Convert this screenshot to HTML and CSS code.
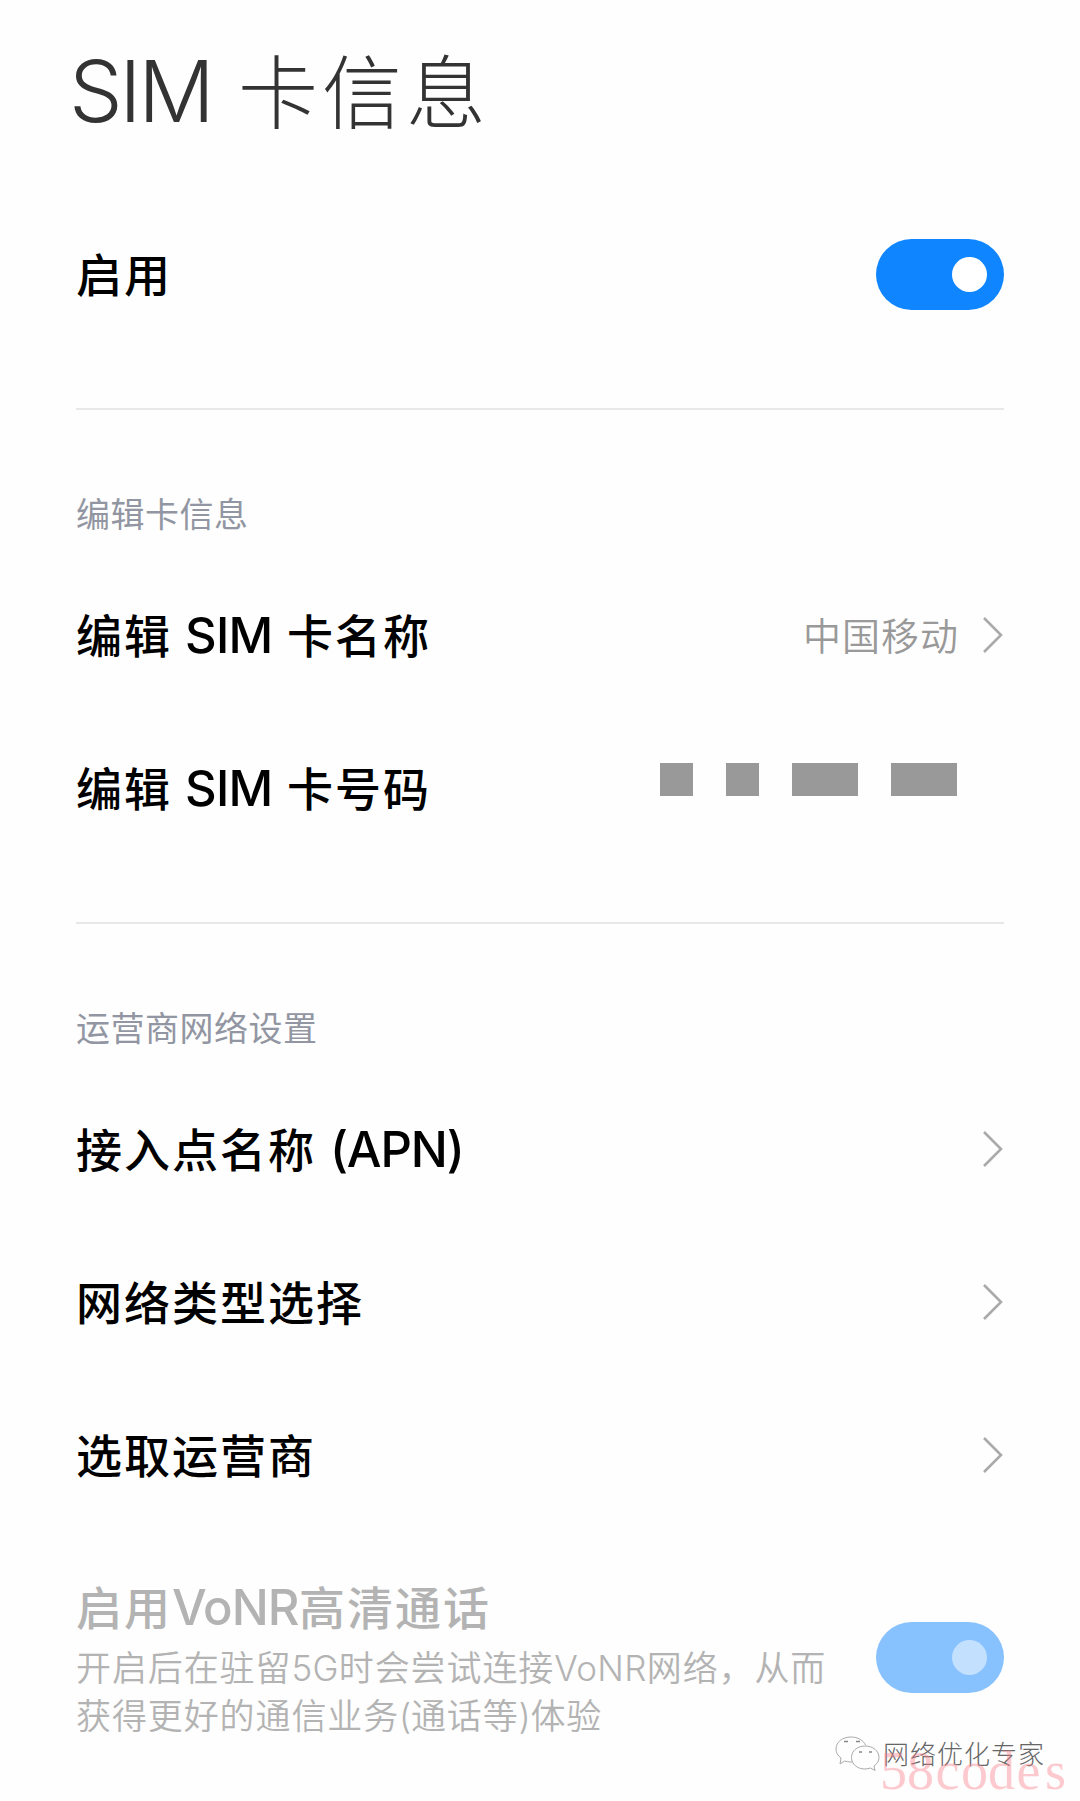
FILE: index.html
```html
<!DOCTYPE html>
<html lang="zh-CN">
<head>
<meta charset="utf-8">
<title>SIM 卡信息</title>
<link rel="stylesheet" href="styles.css">
</head>
<body>
<main class="page">
  <h1 class="title"><span class="latin">SIM</span>卡信息</h1>

  <section class="group group-enable">
    <div class="row">
      <span class="label">启用</span>
      <span class="switch"><span class="knob"></span></span>
    </div>
  </section>

  <section class="group group-card">
    <h2 class="heading">编辑卡信息</h2>
    <div class="row">
      <span class="label">编辑<span class="latin sim">SIM</span>卡名称</span>
      <span class="value">中国移动</span>
      <svg class="chevron" viewBox="0 0 22 38"><path d="M2 1 L19 18 L2 35"/></svg>
    </div>
    <div class="row">
      <span class="label">编辑<span class="latin sim">SIM</span>卡号码</span>
      <span class="mask"><i class="block"></i><i class="block"></i><i class="block wide"></i><i class="block wide"></i></span>
    </div>
  </section>

  <section class="group group-network">
    <h2 class="heading">运营商网络设置</h2>
    <div class="row">
      <span class="label">接入点名称<span class="latin apn">(APN)</span></span>
      <svg class="chevron" viewBox="0 0 22 38"><path d="M2 1 L19 18 L2 35"/></svg>
    </div>
    <div class="row">
      <span class="label">网络类型选择</span>
      <svg class="chevron" viewBox="0 0 22 38"><path d="M2 1 L19 18 L2 35"/></svg>
    </div>
    <div class="row">
      <span class="label">选取运营商</span>
      <svg class="chevron" viewBox="0 0 22 38"><path d="M2 1 L19 18 L2 35"/></svg>
    </div>
    <div class="row row-vonr">
      <div class="text">
        <span class="label">启用<span class="latin vonr">VoNR</span>高清通话</span>
        <p class="desc">开启后在驻留<span class="latin">5G</span>时会尝试连接<span class="latin">VoNR</span>网络，从而<br>获得更好的通信业务<span class="latin paren">(</span>通话等<span class="latin paren">)</span>体验</p>
      </div>
      <span class="switch disabled"><span class="knob"></span></span>
    </div>
  </section>

  <div class="account">
    <svg class="wechat" viewBox="0 0 46 38">
      <path d="M17 26 C14 26 11 25.500 9.500 25 L5 28 L6 22 C2.500 19.500 1 16.500 1 13 C1 6 7.500 1 16 1 C23 1 28.500 4.500 30.500 9"/>
      <path d="M30 10 C38 10 44 15 44 21.500 C44 25 42 28 39 30 L40 34.500 L35.500 32 C34 32.500 32 33 30 33 C22 33 16.500 28 16.500 21.500 C16.500 15 22 10 30 10 Z"/>
      <path class="eyes" d="M9 5.500 h4 M21 5.500 h4 M24 16 h3 M34 16 h3"/>
    </svg>
    <span class="account-name">网络优化专家</span>
  </div>
  <div class="stamp"><b>5</b><b>8</b><b>c</b><b>o</b><b>d</b><b>e</b><b>s</b></div>
</main>
</body>
</html>
```
FILE: styles.css
```css
* { box-sizing: border-box; margin: 0; padding: 0; }

body {
  background: #fefefe;
  color: #000;
  font-family: "Noto Sans CJK SC", sans-serif;
}

.page {
  position: relative;
  width: 1080px;
  height: 1801px;
  padding: 31px 76px 0;
  overflow: hidden;
}

.title {
  height: 113px;
  margin-left: -7px;
  color: #333;
  font-size: 80px;
  font-weight: 300;
  letter-spacing: 4px;
  line-height: 112px;
  white-space: nowrap;
}

.latin {
  font-family: Inter, "Noto Sans CJK SC", sans-serif;
  line-height: 1;
}

.title .latin {
  display: inline-block;
  width: 169px;
  font-size: 85px;
  font-weight: 270;
  letter-spacing: -3.4px;
}

.group-enable {
  height: 266px;
  padding-top: 54px;
  border-bottom: 2px solid #e8e8e8;
}

.group-card {
  height: 514px;
  padding-top: 79px;
  border-bottom: 2px solid #e8e8e8;
}

.group-network { padding-top: 79px; }

.heading {
  height: 48px;
  margin-bottom: 22px;
  color: #9296a2;
  font-size: 34px;
  font-weight: 400;
  letter-spacing: 0.5px;
  line-height: 48px;
}

.row {
  display: flex;
  align-items: center;
  height: 153px;
}

.label {
  flex: 1;
  height: 64px;
  font-size: 46px;
  font-weight: 500;
  letter-spacing: 2px;
  line-height: 58px;
  white-space: nowrap;
}

.label .latin {
  display: inline-block;
  font-size: 49px;
  letter-spacing: -0.7px;
}

.label .sim { width: 115px; padding-left: 13px; }
.label .apn { padding-left: 14px; letter-spacing: -1.2px; }
.label .vonr { width: 127px; letter-spacing: -1px; }

.value {
  margin-right: 23px;
  padding-bottom: 4px;
  color: #999;
  font-size: 38px;
  font-weight: 350;
  letter-spacing: 1px;
  line-height: 50px;
}

.chevron {
  width: 22px;
  height: 38px;
  fill: none;
  stroke: #aaa;
  stroke-width: 2.6;
}

.mask {
  display: flex;
  gap: 33px;
  margin: 0 47px 18px 0;
}

.block { width: 33px; height: 33px; background: #999; }
.block.wide { width: 66px; }

.switch {
  display: flex;
  align-items: center;
  justify-content: flex-end;
  width: 128px;
  height: 71px;
  padding-right: 17px;
  border-radius: 36px;
  background: #0f85ff;
}

.knob { width: 35px; height: 35px; border-radius: 50%; background: #fff; }

.switch.disabled { background: #87c2ff; }
.disabled .knob { background: #c3e0ff; }

.row-vonr { height: 250px; color: #b3b3b3; }
.text { flex: 1; }
.row-vonr .label { display: block; height: 66px; }

.desc {
  font-size: 35px;
  font-weight: 350;
  letter-spacing: 0.9px;
  line-height: 48px;
  white-space: nowrap;
}

.desc .latin { letter-spacing: 0.3px; font-weight: 300; }
.desc .paren { letter-spacing: -0.4px; }

.account {
  position: absolute;
  left: 835px;
  top: 1736px;
  display: flex;
  align-items: center;
  gap: 2px;
}

.wechat {
  width: 46px;
  height: 38px;
  fill: none;
  stroke: #aaa;
  stroke-width: 1;
}

.eyes { stroke: #888; stroke-width: 1.5; }

.account-name {
  padding-bottom: 4px;
  color: #666;
  font-size: 26px;
  font-weight: 300;
  letter-spacing: 1px;
  line-height: 34px;
}

.stamp {
  position: absolute;
  left: 880px;
  top: 1741px;
  display: flex;
  color: rgba(250, 130, 140, 0.42);
  font-family: "Liberation Serif", serif;
  font-size: 54px;
  line-height: 60px;
}

.stamp b { width: 27px; font-weight: 400; text-align: center; }
```
